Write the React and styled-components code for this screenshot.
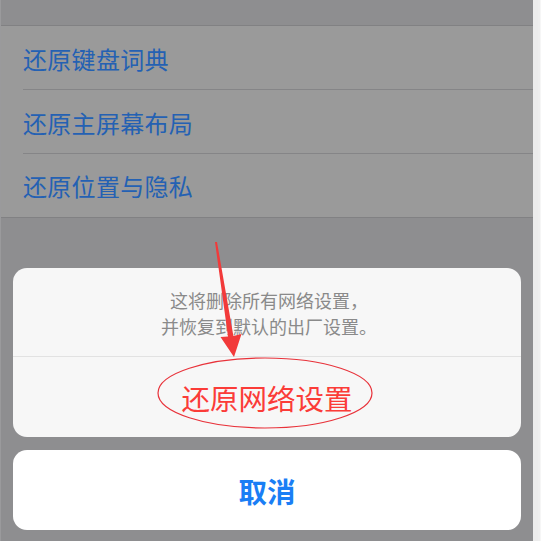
import React from 'react'
import styled, { createGlobalStyle } from 'styled-components'

const GlobalStyle = createGlobalStyle`
  html, body {
    margin: 0;
    padding: 0;
    background: #8e8e90;
  }
  * {
    box-sizing: border-box;
  }
`

const resetItems = ['还原键盘词典', '还原主屏幕布局', '还原位置与隐私']

const App = () => {
  return (
    <>
      <GlobalStyle />
      <Screen>
        <Phone>
          <TopBand />
          <List>
            {resetItems.map((item, i) => (
              <Row key={item} last={i === resetItems.length - 1}>
                {item}
              </Row>
            ))}
          </List>
          <Sheet>
            <SheetGroup>
              <Message>
                这将删除所有网络设置，
                <br />
                并恢复到默认的出厂设置。
              </Message>
              <SheetButton tone="danger">还原网络设置</SheetButton>
            </SheetGroup>
            <SheetGroup solid>
              <SheetButton tone="cancel">取消</SheetButton>
            </SheetGroup>
          </Sheet>
        </Phone>
        <Edge />
        <Annotation viewBox="0 0 541 541" width="541" height="541">
          <ellipse cx="265" cy="393" rx="107" ry="35" fill="none" stroke="#e8323a" strokeWidth="1.2" />
          <polygon
            points="215,242 217,242 233.4,336 241.5,334 234,357 220.5,337 228,336.5"
            fill="#f23a3a"
          />
        </Annotation>
      </Screen>
    </>
  )
}

const Screen = styled.div`
  position: relative;
  display: flex;
  width: 541px;
  height: 541px;
  overflow: hidden;
  font-family: "Noto Sans CJK SC", "Noto Sans", sans-serif;
`

const Phone = styled.div`
  flex: 1;
  display: flex;
  flex-direction: column;
  background: #8e8e90;
  border-left: 1px solid #9a9a9c;
`

const Edge = styled.div`
  width: 8px;
  background: #eeeeee;
  border-left: 5px solid #ececec;
  border-right: 1px solid #f6f6f6;
`

const TopBand = styled.div`
  height: 26px;
  border-bottom: 1px solid #818183;
`

const List = styled.div`
  background: #9a9a9a;
  border-bottom: 1px solid #818183;
`

const Row = styled.div`
  position: relative;
  height: ${p => (p.last ? '63px' : '64px')};
  display: flex;
  align-items: center;
  padding-left: 22px;
  font-size: 24px;
  color: #2461b3;
  letter-spacing: 0.3px;

  &::after {
    content: '';
    display: ${p => (p.last ? 'none' : 'block')};
    position: absolute;
    left: 22px;
    right: 0;
    bottom: 0;
    height: 1px;
    background: #858587;
  }
`

const Sheet = styled.div`
  margin-top: auto;
  display: flex;
  flex-direction: column;
  gap: 13px;
  padding: 0 12px 11px 12px;
`

const SheetGroup = styled.div`
  background: ${p => (p.solid ? '#ffffff' : '#f7f7f7')};
  border-radius: 14px;
  overflow: hidden;
`

const Message = styled.div`
  height: 89px;
  display: flex;
  align-items: center;
  justify-content: center;
  text-align: center;
  font-size: 18px;
  line-height: 26px;
  color: #8a8a8a;
  border-bottom: 1px solid #e2e2e2;
  padding-left: 4px;
  padding-top: 1px;
`

const SheetButton = styled.div`
  height: 80px;
  display: flex;
  align-items: center;
  justify-content: center;
  font-size: 28.5px;
  color: ${p => (p.tone === 'danger' ? '#fb3c38' : '#1a7ef5')};
  font-weight: ${p => (p.tone === 'danger' ? 400 : 600)};
`

const Annotation = styled.svg`
  position: absolute;
  left: 0;
  top: 0;
  pointer-events: none;
`

export default App
